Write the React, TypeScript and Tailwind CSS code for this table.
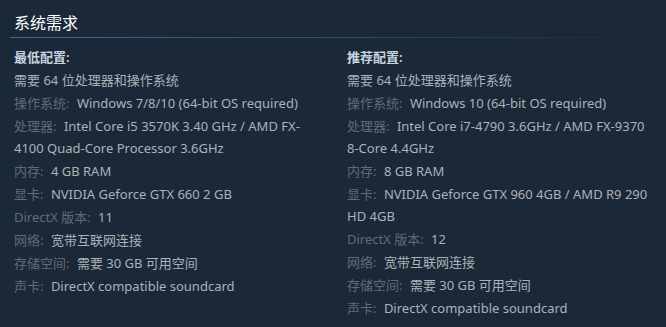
import React from "react";

type Row = { label?: string; value: string };

const left: Row[] = [
  { value: "需要 64 位处理器和操作系统" },
  { label: "操作系统:", value: "Windows 7/8/10 (64-bit OS required)" },
  { label: "处理器:", value: "Intel Core i5 3570K 3.40 GHz / AMD FX-4100 Quad-Core Processor 3.6GHz" },
  { label: "内存:", value: "4 GB RAM" },
  { label: "显卡:", value: "NVIDIA Geforce GTX 660 2 GB" },
  { label: "DirectX 版本:", value: "11" },
  { label: "网络:", value: "宽带互联网连接" },
  { label: "存储空间:", value: "需要 30 GB 可用空间" },
  { label: "声卡:", value: "DirectX compatible soundcard" },
];

const right: Row[] = [
  { value: "需要 64 位处理器和操作系统" },
  { label: "操作系统:", value: "Windows 10 (64-bit OS required)" },
  { label: "处理器:", value: "Intel Core i7-4790 3.6GHz / AMD FX-9370 8-Core 4.4GHz" },
  { label: "内存:", value: "8 GB RAM" },
  { label: "显卡:", value: "NVIDIA Geforce GTX 960 4GB / AMD R9 290 HD 4GB" },
  { label: "DirectX 版本:", value: "12" },
  { label: "网络:", value: "宽带互联网连接" },
  { label: "存储空间:", value: "需要 30 GB 可用空间" },
  { label: "声卡:", value: "DirectX compatible soundcard" },
];

function Col({ title, rows }: { title: string; rows: Row[] }) {
  return (
    <div className="w-[308px]">
      <div className="font-semibold text-[#c6d4df] leading-[22px] mb-px">{title}</div>
      <ul>
        {rows.map((r, i) => (
          <li key={i} className="leading-[22px] mb-px text-[#acb2b8]">
            {r.label && <span className="text-[#626a73] mr-[4px]">{r.label} </span>}
            {r.value}
          </li>
        ))}
      </ul>
    </div>
  );
}

export default function App() {
  return (
    <div
      className="w-[666px] h-[327px] bg-[#1b2838] text-[13px] overflow-hidden"
      style={{ fontFamily: '"Noto Sans", "Noto Sans CJK SC", sans-serif' }}
    >
      <div className="pl-[14px] pt-[12px] text-[16px] leading-[22px] text-white">系统需求</div>
      <div className="mt-[3px] ml-[10px] h-px w-[640px] bg-gradient-to-r from-[#3d6c8d] via-[#2d4f66] to-transparent" />
      <div className="flex pl-[14px] pt-[8px] gap-[25px]">
        <Col title="最低配置:" rows={left} />
        <Col title="推荐配置:" rows={right} />
      </div>
    </div>
  );
}
